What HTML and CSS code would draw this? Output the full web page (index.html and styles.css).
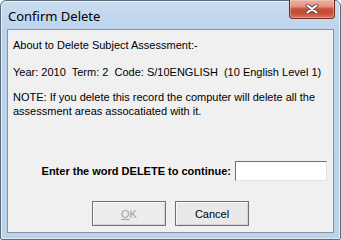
FILE: index.html
```html
<!DOCTYPE html>
<html>
<head>
<meta charset="utf-8">
<link rel="stylesheet" href="styles.css">
</head>
<body>
<div class="window">
  <div class="titlebar">
    <span class="title">Confirm Delete</span>
    <div class="close">
      <svg width="14" height="10" viewBox="0 0 14 10">
        <path d="M2.5 1.5 L11.5 8.5 M11.5 1.5 L2.5 8.5" stroke="#5a4a48" stroke-width="3.6" stroke-linecap="round"/>
        <path d="M2.5 1.5 L11.5 8.5 M11.5 1.5 L2.5 8.5" stroke="#ffffff" stroke-width="2" stroke-linecap="round"/>
      </svg>
    </div>
  </div>
  <div class="client">
    <p class="line first">About to Delete Subject Assessment:-</p>
    <p class="line year">Year: 2010&nbsp; Term: 2&nbsp; Code: S/10ENGLISH&nbsp; (10 English Level 1)</p>
    <p class="line note">NOTE: If you delete this record the computer will delete all the<br>assessment areas assocatiated with it.</p>
    <div class="entry">
      <label class="entry-label" for="word">Enter the word DELETE to continue:</label>
      <input class="entry-input" id="word" type="text">
    </div>
    <div class="buttons">
      <button class="btn btn-disabled" type="button"><u>O</u>K</button>
      <button class="btn" type="button">Cancel</button>
    </div>
  </div>
</div>
</body>
</html>
```
FILE: styles.css
```css
html, body {
  margin: 0;
  padding: 0;
  background: #ffffff;
}

.window {
  box-sizing: border-box;
  width: 341px;
  height: 240px;
  border: 1px solid #5d6b7a;
  border-radius: 6px 6px 2px 2px;
  background: linear-gradient(180deg, #c9dcf0 0px, #bdd4ed 30px, #bcd3ec 100%);
  padding: 0 6px 6px 6px;
  display: flex;
  flex-direction: column;
  box-shadow: inset 0 0 0 1px rgba(255,255,255,0.6);
}

.titlebar {
  height: 28px;
  display: flex;
  align-items: flex-start;
  justify-content: space-between;
}

.title {
  font-family: "Noto Sans", "Open Sans", sans-serif;
  font-size: 13px;
  color: #000000;
  margin-top: 7px;
  margin-left: 1px;
  line-height: 16px;
}

.close {
  width: 46px;
  height: 19px;
  box-sizing: border-box;
  margin-top: -1px;
  margin-right: -1px;
  border: 1px solid #6e2a20;
  border-top: none;
  border-radius: 0 0 4px 4px;
  background: linear-gradient(180deg, #eab0a3 0%, #e39784 35%, #c9513b 50%, #c44a33 70%, #d87560 100%);
  display: flex;
  align-items: center;
  justify-content: center;
  box-shadow: inset 0 0 0 1px rgba(255,215,200,0.45);
}

.client {
  flex: 1;
  border: 1px solid #8391a1;
  background: #f0f0f0;
  padding: 8px 5px 0 5px;
  display: flex;
  flex-direction: column;
  font-family: "Liberation Sans", Arial, sans-serif;
  font-size: 11px;
  color: #000000;
}

.line {
  margin: 0;
  line-height: 14px;
}

.year {
  margin-top: 13px;
}

.note {
  margin-top: 11px;
}

.entry {
  display: flex;
  justify-content: flex-end;
  align-items: center;
  gap: 4px;
  margin-top: 43px;
  margin-right: 1px;
}

.entry-label {
  font-weight: bold;
}

.entry-input {
  box-sizing: border-box;
  width: 92px;
  height: 20px;
  margin: 0;
  padding: 0;
  border: 1px solid;
  border-color: #707070 #e3e3e3 #e3e3e3 #707070;
  background: #ffffff;
  outline: none;
}

.buttons {
  display: flex;
  justify-content: center;
  gap: 9px;
  margin-top: 20px;
}

.btn {
  box-sizing: border-box;
  width: 74px;
  height: 25px;
  margin: 0;
  padding: 0;
  border: 1px solid #707070;
  border-radius: 0;
  background: #e8e8e8;
  box-shadow: inset 1px 1px 0 #fbfbfb, inset -1px -1px 0 #d4d4d4;
  font-family: "Liberation Sans", Arial, sans-serif;
  font-size: 11px;
  color: #000000;
}

.btn-disabled {
  color: #a0a0a0;
  background: #ececec;
}
```
